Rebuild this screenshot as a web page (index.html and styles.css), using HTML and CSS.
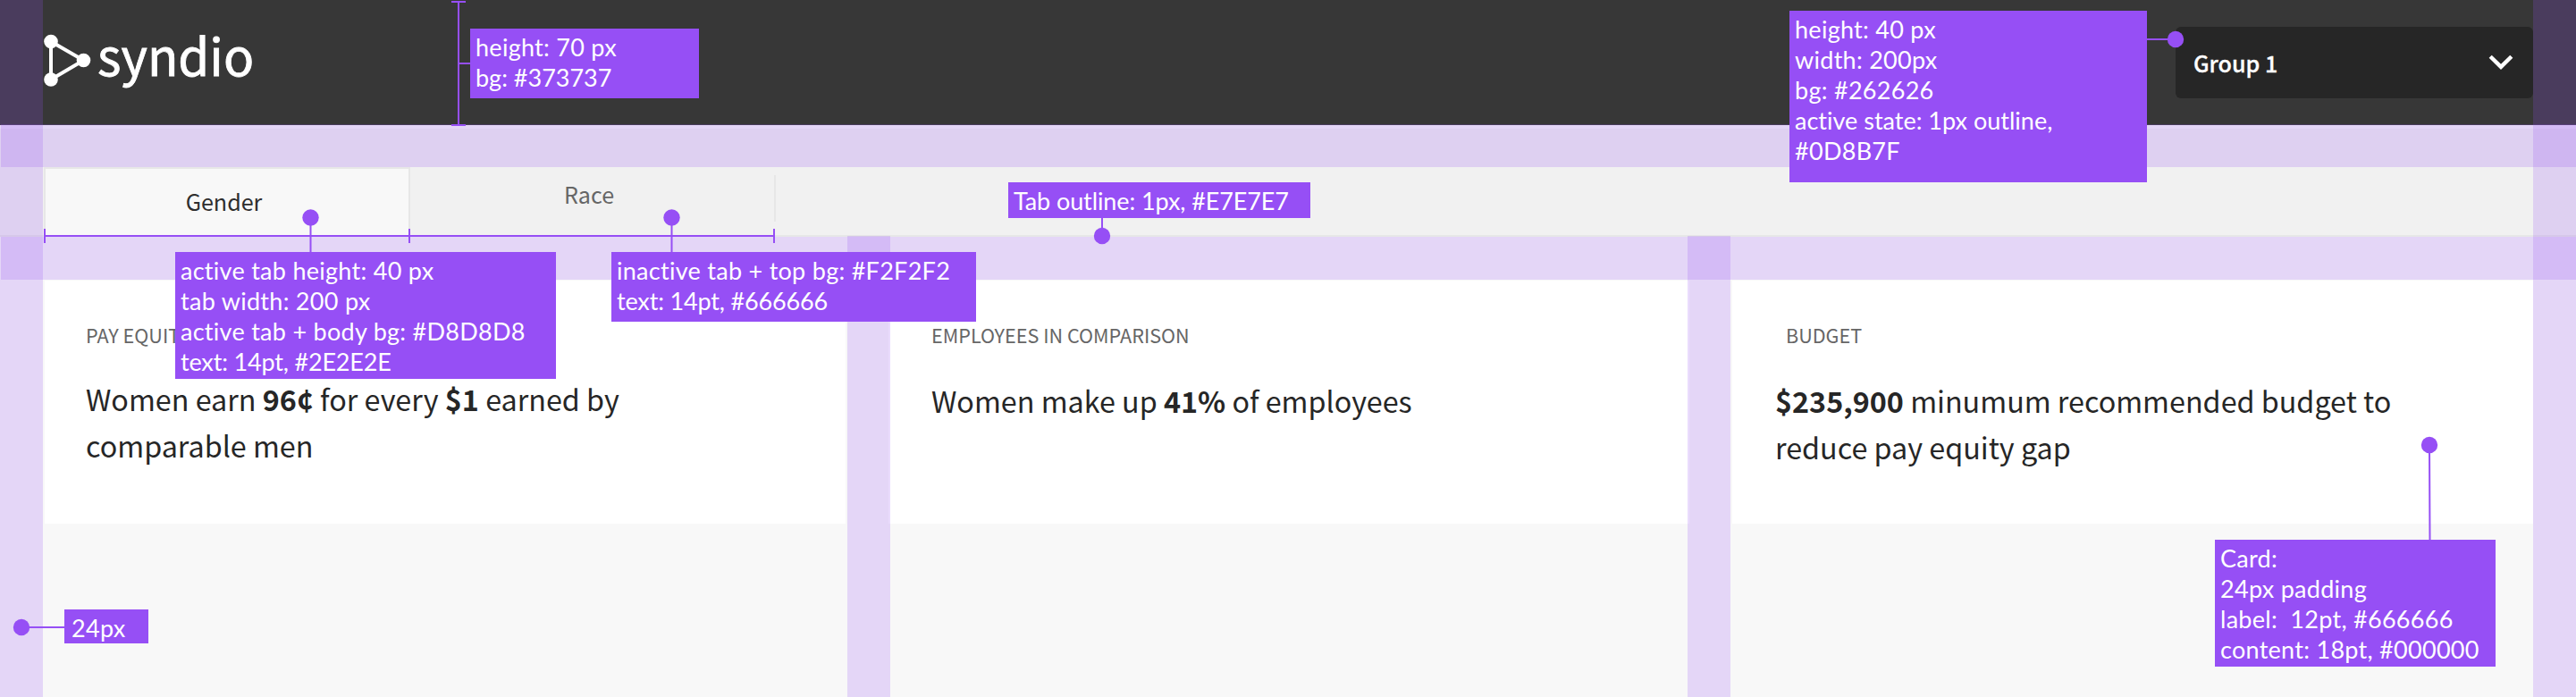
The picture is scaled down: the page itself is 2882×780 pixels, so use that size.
FILE: index.html
```
<!DOCTYPE html>
<html lang="en">
<head>
<meta charset="utf-8">
<title>syndio</title>
<link rel="stylesheet" href="styles.css">
</head>
<body>
<div class="page">
  <header class="header">
    <div class="logo">
      <svg class="logo-mark" width="54" height="60" viewBox="0 0 54 60" aria-hidden="true">
        <path d="M9 8.5V51L45.5 29.5Z" fill="none" stroke="#fff" stroke-width="4"/>
        <circle cx="9" cy="8.5" r="7.8" fill="#fff"/>
        <circle cx="9" cy="51" r="7.8" fill="#fff"/>
        <circle cx="45.5" cy="29.5" r="7.8" fill="#fff"/>
      </svg>
      <span class="logo-text">syndio</span>
    </div>
    <div class="select">
      <span>Group 1</span>
      <svg width="28" height="18" viewBox="0 0 28 18" aria-hidden="true"><path d="M2.2 2.2L14 13.8L25.8 2.2" fill="none" stroke="#fff" stroke-width="4.4"/></svg>
    </div>
  </header>

  <nav class="tabs">
    <div class="tab tab-active">Gender</div>
    <div class="tab tab-inactive"><span>Race</span></div>
  </nav>

  <main class="cards">
    <section class="card card-equity">
      <h2 class="card-label">PAY EQUITY</h2>
      <p class="card-text">Women earn <b>96¢</b> for every <b>$1</b> earned by<br>comparable men</p>
    </section>
    <section class="card card-employees">
      <h2 class="card-label">EMPLOYEES IN COMPARISON</h2>
      <p class="card-text">Women make up <b>41%</b> of employees</p>
    </section>
    <section class="card card-budget">
      <h2 class="card-label">BUDGET</h2>
      <p class="card-text"><b>$235,900</b> minumum recommended budget to<br>reduce pay equity gap</p>
    </section>
  </main>

  <svg class="guides" width="2882" height="780" viewBox="0 0 2882 780" aria-hidden="true">
    <g fill="#964ff5" fill-opacity=".2">
      <rect x="0" y="0" width="48" height="780"/>
      <rect x="2834" y="0" width="48" height="780"/>
      <rect x="948" y="264" width="48" height="516"/>
      <rect x="1888" y="264" width="48" height="516"/>
      <rect x="1" y="139" width="2881" height="48"/>
      <rect x="1" y="265" width="2881" height="48"/>
    </g>
    <g stroke="#964ff5" stroke-width="2" fill="none">
      <path d="M505 2H521M513 2V140M505 140H521M513 71H526"/>
      <path d="M50 256V272M458 256V272M866 256V272M50 264H866"/>
      <path d="M347.5 243V282M751.5 243V282M1233 244V264M2402 44H2434M2718 498L2718.5 604M24 702H72"/>
    </g>
    <g fill="#964ff5">
      <circle cx="347.5" cy="243.5" r="9.2"/>
      <circle cx="751.5" cy="243.5" r="9.2"/>
      <circle cx="1233" cy="264" r="9.2"/>
      <circle cx="2434" cy="44" r="9.2"/>
      <circle cx="2718" cy="498" r="9.2"/>
      <circle cx="24" cy="702" r="9.2"/>
    </g>
  </svg>

  <div class="note note-header"><div>height: 70 px</div><div class="ls-0">bg: #373737</div></div>
  <div class="note note-active"><div>active tab height: 40 px</div><div>tab width: 200 px</div><div>active tab + body bg: #D8D8D8</div><div class="ls-n">text: 14pt, #2E2E2E</div></div>
  <div class="note note-inactive"><div>inactive tab + top bg: #F2F2F2</div><div class="ls-n">text: 14pt, #666666</div></div>
  <div class="note note-outline"><div class="ls-s">Tab outline: 1px, #E7E7E7</div></div>
  <div class="note note-select"><div>height: 40 px</div><div>width: 200px</div><div>bg: #262626</div><div class="ls-0">active state: 1px outline,</div><div>#0D8B7F</div></div>
  <div class="note note-card"><div>Card:</div><div>24px padding</div><div>label: &nbsp;12pt, #666666</div><div>content: 18pt, #000000</div></div>
  <div class="note note-gutter"><div>24px</div></div>
</div>
</body>
</html>
```
FILE: styles.css
```
* { box-sizing: border-box; }

body {
  margin: 0;
  background: #f8f8f8;
  font-family: "Noto Sans CJK SC", "Noto Sans", sans-serif;
}

.page {
  position: relative;
  width: 2882px;
  height: 780px;
  overflow: hidden;
}

/* Header */
.header {
  display: flex;
  justify-content: space-between;
  align-items: center;
  height: 140px;
  padding: 0 48px;
  background: #373737;
  color: #fff;
}

.logo {
  display: flex;
  align-items: center;
  height: 140px;
}

.logo-mark { margin-bottom: 4px; }

.logo-text {
  margin: 0 0 20px 7px;
  font-size: 56.5px;
  line-height: 60px;
  -webkit-text-stroke: .8px #fff;
}

.select {
  display: flex;
  align-items: center;
  justify-content: space-between;
  width: 400px;
  height: 80px;
  padding: 0 22px 0 20px;
  border-radius: 6px;
  background: #262626;
  font-size: 25.1px;
  font-weight: 500;
  line-height: 40px;
}

.select span { margin-bottom: 1px; -webkit-text-stroke: .3px #fff; }

/* Tabs */
.tabs {
  display: flex;
  align-items: flex-end;
  height: 121px;
  margin-top: 4px;
  padding-left: 49px;
  border-bottom: 2px solid #e7e7e7;
  background: #f1f1f1;
}

.tab {
  height: 76px;
  font-size: 25.1px;
  line-height: 36px;
  text-align: center;
}

.tab-active {
  width: 410px;
  padding: 18px 7px 0 0;
  border: 2px solid #e7e7e7;
  border-bottom: 0;
  background: #f8f8f8;
  color: #2e2e2e;
}

.tab-inactive {
  display: flex;
  justify-content: center;
  width: 409px;
  height: 67px;
  padding-right: 9px;
  color: #666;
  background: linear-gradient(#e7e7e7, #e7e7e7) right top / 2px 52px no-repeat;
}

.tab-inactive span { margin-top: 3px; }

/* Cards */
.cards {
  display: grid;
  grid-template-columns: repeat(3, 896px);
  gap: 48px;
  margin-top: 49px;
  padding-left: 50px;
}

.card {
  height: 272px;
  padding: 45px 0 0 46px;
  background: #fff;
}

.card-label {
  margin: 0 0 31px;
  color: #666;
  font-size: 21.6px;
  font-weight: 400;
  line-height: 32px;
}

.card-text {
  margin: 0;
  color: #262626;
  font-size: 32.3px;
  line-height: 52px;
  white-space: nowrap;
}

.card-equity .card-label { margin-bottom: 29px; }
.card-employees { padding-left: 48px; }
.card-budget { padding-left: 48px; }
.card-budget .card-label { padding-left: 12px; }

/* Spec annotations laid over the interface */
.guides {
  position: absolute;
  left: 0;
  top: 0;
}

.note {
  position: absolute;
  padding: 4px 0 0 6px;
  background: #964ff5;
  color: #fff;
  font-family: Lato, sans-serif;
  font-size: 27px;
  line-height: 34px;
  letter-spacing: .28px;
  white-space: nowrap;
}

.ls-0 { letter-spacing: 0; font-variant-ligatures: none; }
.ls-s { letter-spacing: -.1px; }
.ls-n { letter-spacing: -.17px; }

.note-header { left: 526px; top: 32px; width: 256px; height: 78px; }
.note-active { left: 196px; top: 282px; width: 426px; height: 142px; }
.note-inactive { left: 684px; top: 282px; width: 408px; height: 78px; }
.note-outline { left: 1128px; top: 204px; width: 338px; height: 40px; }
.note-select { left: 2002px; top: 12px; width: 400px; height: 192px; }
.note-card { left: 2478px; top: 604px; width: 314px; height: 142px; }
.note-gutter { left: 72px; top: 682px; width: 94px; height: 38px; padding-left: 8px; }
```
